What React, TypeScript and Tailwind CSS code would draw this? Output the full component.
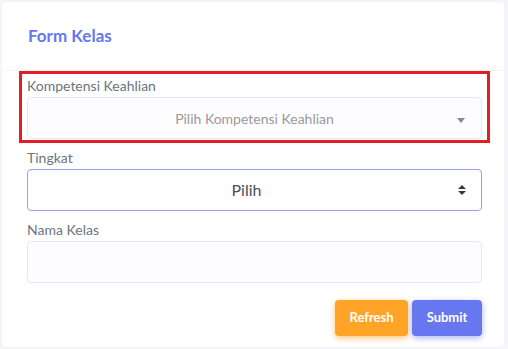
import React from 'react';

const font = { fontFamily: 'Lato, "Noto Sans", sans-serif' };

const App: React.FC = () => {
  return (
    <div className="min-h-[349px] w-[508px] bg-[#f4f6f9] p-[2px] pr-[4px]" style={font}>
      <div className="rounded-[3px] bg-white shadow-[0_0_1px_#dde]">
        {/* Header */}
        <div className="flex h-[69px] items-center border-b border-[#f4f4f8] pl-[26px]">
          <h4 className="text-[17px] font-bold text-[#6777ef]">Form Kelas</h4>
        </div>

        <div className="pb-[11px] pl-[25px] pr-[22px]">
          {/* Kompetensi Keahlian (highlighted) */}
          <div className="-mx-[8px] border-[3px] border-[#e51c23] px-[5px] pb-[1px] pt-[2px]">
            <label className="mb-[1px] block text-[14px] leading-[20px] text-[#6c757d]">
              Kompetensi Keahlian
            </label>
            <div className="relative flex h-[42px] items-center justify-center rounded-[4px] border border-[#e4e6fc] bg-[#fdfdff]">
              <span className="text-[14px] text-[#999]">Pilih Kompetensi Keahlian</span>
              <span className="absolute right-[16px] top-[20px] h-0 w-0 border-x-[4px] border-t-[5px] border-x-transparent border-t-[#888]" />
            </div>
          </div>

          {/* Tingkat */}
          <div className="mt-[5px]">
            <label className="mb-[1px] block text-[14px] leading-[20px] text-[#6c757d]">Tingkat</label>
            <div className="relative flex h-[42px] items-center justify-center rounded-[4px] border border-[#95a0f4] bg-[#fefeff] pl-[12px] pr-[28px]">
              <span className="text-[16px] text-[#495057]">Pilih</span>
              <svg className="absolute right-[14px] top-[14px]" width="10" height="12" viewBox="0 0 10 12">
                <path d="M1 5 L5 1 L9 5 Z" fill="#343a40" />
                <path d="M1 7 L5 11 L9 7 Z" fill="#343a40" />
              </svg>
            </div>
          </div>

          {/* Nama Kelas */}
          <div className="mt-[9px]">
            <label className="mb-[1px] block text-[14px] leading-[20px] text-[#6c757d]">Nama Kelas</label>
            <div className="h-[42px] rounded-[4px] border border-[#e4e6fc] bg-[#fdfdff]" />
          </div>

          {/* Actions */}
          <div className="mt-[17px] flex justify-end gap-[4px]">
            <button
              type="button"
              className="h-[36px] w-[73px] rounded-[4px] bg-[#ffa426] text-[13px] font-bold text-white shadow-[0_2px_6px_#ffc473]"
            >
              Refresh
            </button>
            <button
              type="button"
              className="h-[36px] w-[70px] rounded-[4px] bg-[#6777ef] text-[13px] font-bold text-white shadow-[0_2px_6px_#acb5f6]"
            >
              Submit
            </button>
          </div>
        </div>
      </div>
    </div>
  );
};

export default App;
